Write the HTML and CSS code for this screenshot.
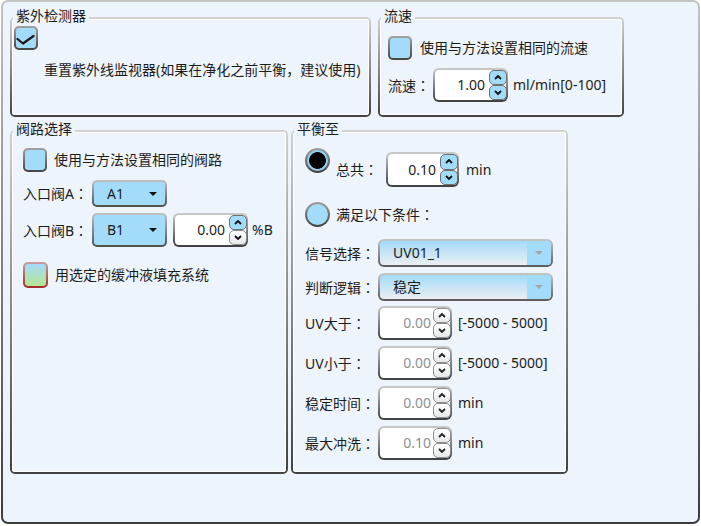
FILE: index.html
```html
<!DOCTYPE html>
<html>
<head>
<meta charset="utf-8">
<link rel="stylesheet" href="styles.css">
</head>
<body>
<div class="frame">
  <div class="row top-row">
    <div class="group g-uv">
      <span class="group-title">紫外检测器</span>
      <div class="group-body uv-body">
        <div class="check">
          <svg width="20" height="20" viewBox="0 0 20 20"><polyline points="1.5,11 7,15.5 17.5,8" fill="none" stroke="#1a1a1a" stroke-width="2.2" stroke-linejoin="round" stroke-linecap="round"/></svg>
        </div>
        <div class="uv-text">重置紫外线监视器(如果在净化之前平衡，建议使用)</div>
      </div>
    </div>
    <div class="group g-flow">
      <span class="group-title">流速</span>
      <div class="group-body flow-body">
        <div class="line">
          <div class="check"></div>
          <span class="cap">使用与方法设置相同的流速</span>
        </div>
        <div class="line flow-row">
          <span class="lbl w45">流速<span class="colon">：</span></span>
          <div class="spin w75">
            <span class="spin-val">1.00</span>
            <div class="spin-btns">
              <span class="sb"><svg width="8" height="5" viewBox="0 0 8 5"><polyline points="1,4 4,1 7,4" fill="none" stroke="#111" stroke-width="1.8"/></svg></span>
              <span class="sb"><svg width="8" height="5" viewBox="0 0 8 5"><polyline points="1,1 4,4 7,1" fill="none" stroke="#111" stroke-width="1.8"/></svg></span>
            </div>
          </div>
          <span class="unit">ml/min[0-100]</span>
        </div>
      </div>
    </div>
  </div>

  <div class="row bottom-row">
    <div class="group g-valve">
      <span class="group-title">阀路选择</span>
      <div class="group-body valve-body">
        <div class="line">
          <div class="check"></div>
          <span class="cap c7">使用与方法设置相同的阀路</span>
        </div>
        <div class="line valve-a">
          <span class="lbl w69">入口阀A<span class="colon">：</span></span>
          <div class="combo"><span>A1</span><span class="tri"></span></div>
        </div>
        <div class="line valve-b">
          <span class="lbl w69">入口阀B<span class="colon">：</span></span>
          <div class="combo h34"><span>B1</span><span class="tri"></span></div>
          <div class="spin w75 ml6">
            <span class="spin-val">0.00</span>
            <div class="spin-btns">
              <span class="sb"><svg width="8" height="5" viewBox="0 0 8 5"><polyline points="1,4 4,1 7,4" fill="none" stroke="#111" stroke-width="1.8"/></svg></span>
              <span class="sb dis"><svg width="8" height="5" viewBox="0 0 8 5"><polyline points="1,1 4,4 7,1" fill="none" stroke="#111" stroke-width="1.8"/></svg></span>
            </div>
          </div>
          <span class="unit u4">%B</span>
        </div>
        <div class="line fill-row">
          <div class="check fill"></div>
          <span class="cap c7">用选定的缓冲液填充系统</span>
        </div>
      </div>
    </div>

    <div class="group g-eq">
      <span class="group-title">平衡至</span>
      <div class="group-body eq-body">
        <div class="eq-first">
          <div class="radio on"></div>
          <div class="line total">
            <span class="lbl w50">总共<span class="colon">：</span></span>
            <div class="spin w73 h35">
              <span class="spin-val">0.10</span>
              <div class="spin-btns">
                <span class="sb"><svg width="8" height="5" viewBox="0 0 8 5"><polyline points="1,4 4,1 7,4" fill="none" stroke="#111" stroke-width="1.8"/></svg></span>
                <span class="sb"><svg width="8" height="5" viewBox="0 0 8 5"><polyline points="1,1 4,4 7,1" fill="none" stroke="#111" stroke-width="1.8"/></svg></span>
              </div>
            </div>
            <span class="unit u7">min</span>
          </div>
        </div>
        <div class="line cond">
          <div class="radio"></div>
          <span class="cap c6">满足以下条件<span class="colon">：</span></span>
        </div>
        <div class="line sig">
          <span class="lbl w73">信号选择<span class="colon">：</span></span>
          <div class="dd"><span class="dd-text">UV01_1</span><span class="dd-btn"><span class="tri gray"></span></span></div>
        </div>
        <div class="line logic">
          <span class="lbl w73">判断逻辑<span class="colon">：</span></span>
          <div class="dd"><span class="dd-text">稳定</span><span class="dd-btn"><span class="tri gray"></span></span></div>
        </div>
        <div class="line crow first">
          <span class="lbl w73">UV大于<span class="colon">：</span></span>
          <div class="spin w74 dis">
            <span class="spin-val">0.00</span>
            <div class="spin-btns">
              <span class="sb"><svg width="8" height="5" viewBox="0 0 8 5"><polyline points="1,4 4,1 7,4" fill="none" stroke="#222" stroke-width="1.8"/></svg></span>
              <span class="sb"><svg width="8" height="5" viewBox="0 0 8 5"><polyline points="1,1 4,4 7,1" fill="none" stroke="#222" stroke-width="1.8"/></svg></span>
            </div>
          </div>
          <span class="unit u6">[-5000 - 5000]</span>
        </div>
        <div class="line crow">
          <span class="lbl w73">UV小于<span class="colon">：</span></span>
          <div class="spin w74 dis">
            <span class="spin-val">0.00</span>
            <div class="spin-btns">
              <span class="sb"><svg width="8" height="5" viewBox="0 0 8 5"><polyline points="1,4 4,1 7,4" fill="none" stroke="#222" stroke-width="1.8"/></svg></span>
              <span class="sb"><svg width="8" height="5" viewBox="0 0 8 5"><polyline points="1,1 4,4 7,1" fill="none" stroke="#222" stroke-width="1.8"/></svg></span>
            </div>
          </div>
          <span class="unit u6">[-5000 - 5000]</span>
        </div>
        <div class="line crow">
          <span class="lbl w73">稳定时间<span class="colon">：</span></span>
          <div class="spin w74 dis">
            <span class="spin-val">0.00</span>
            <div class="spin-btns">
              <span class="sb"><svg width="8" height="5" viewBox="0 0 8 5"><polyline points="1,4 4,1 7,4" fill="none" stroke="#222" stroke-width="1.8"/></svg></span>
              <span class="sb"><svg width="8" height="5" viewBox="0 0 8 5"><polyline points="1,1 4,4 7,1" fill="none" stroke="#222" stroke-width="1.8"/></svg></span>
            </div>
          </div>
          <span class="unit u6">min</span>
        </div>
        <div class="line crow">
          <span class="lbl w73">最大冲洗<span class="colon">：</span></span>
          <div class="spin w74 dis">
            <span class="spin-val">0.10</span>
            <div class="spin-btns">
              <span class="sb"><svg width="8" height="5" viewBox="0 0 8 5"><polyline points="1,4 4,1 7,4" fill="none" stroke="#222" stroke-width="1.8"/></svg></span>
              <span class="sb"><svg width="8" height="5" viewBox="0 0 8 5"><polyline points="1,1 4,4 7,1" fill="none" stroke="#222" stroke-width="1.8"/></svg></span>
            </div>
          </div>
          <span class="unit u6">min</span>
        </div>
      </div>
    </div>
  </div>
</div>
</body>
</html>
```
FILE: styles.css
```css
* { box-sizing: border-box; }
html, body { margin: 0; padding: 0; background: #ffffff; }
body {
  width: 701px;
  height: 526px;
  overflow: hidden;
  font-family: "Noto Sans", "Noto Sans CJK SC", sans-serif;
  font-size: 14px;
  color: #1c1c1c;
}
.colon { font-family: "Noto Sans CJK TC", sans-serif; }
.frame {
  margin: 0 1px 0 1px;
  width: 699px;
  height: 524px;
  border: 2px solid transparent;
  border-radius: 7px;
  background: linear-gradient(#eef4fc, #eef4fc) padding-box, linear-gradient(#c4c4c4, #3c3c3c) border-box;
  padding: 15px 0 0 7px;
}
.row { display: flex; align-items: flex-start; }
.top-row { gap: 7px; }
.bottom-row { gap: 3px; margin-top: 13px; }

.group {
  position: relative;
  padding: 2px;
  border-radius: 5px;
  background: linear-gradient(#d2d2d2, #424242);
}
.group-body {
  height: 100%;
  border-radius: 3px;
  background: #eef4fc;
  box-shadow: inset 0 0 0 1px #ffffff;
}
.group-title {
  position: absolute;
  top: -10px;
  left: 3px;
  padding: 0 3px;
  line-height: 18px;
  background: #eef4fc;
  color: #1c1c1c;
  z-index: 1;
}
.g-uv { width: 361px; height: 100px; }
.g-flow { width: 246px; height: 100px; }
.g-valve { width: 278px; height: 344px; }
.g-eq { width: 277px; height: 344px; }

.line { display: flex; align-items: center; }
.lbl { flex: none; white-space: nowrap; line-height: 20px; }
.cap { margin-left: 8px; line-height: 20px; white-space: nowrap; }
.c7 { margin-left: 7px; }
.c6 { margin-left: 6px; }
.unit { margin-left: 5px; white-space: nowrap; line-height: 20px; }
.u4 { margin-left: 4px; }
.u6 { margin-left: 6px; }
.u7 { margin-left: 7px; }
.w45 { width: 45px; }
.w50 { width: 50px; }
.w69 { width: 69px; }
.w73 { width: 73px; }
.ml6 { margin-left: 6px; }

/* checkbox */
.check {
  flex: none;
  width: 24px;
  height: 24px;
  border: 2px solid transparent;
  border-radius: 5px;
  background: linear-gradient(#a3dbfa, #a3dbfa) padding-box, linear-gradient(#a2a2a2, #434343) border-box;
}
.check svg { display: block; }
.check.fill {
  height: 26px;
  width: 25px;
  background: linear-gradient(#a3dbfa, #b4e78e) padding-box, linear-gradient(#c9a0a0, #a52a2a) border-box;
}

/* radio */
.radio {
  flex: none;
  width: 25px;
  height: 25px;
  border-radius: 50%;
  border: 2px solid transparent;
  background: linear-gradient(#a3dbfa, #a3dbfa) padding-box, linear-gradient(#a0a0a0, #404040) border-box;
}
.radio.on {
  background: radial-gradient(circle, #000 0 8px, #8fd0f2 8.7px) padding-box, linear-gradient(#a0a0a0, #404040) border-box;
}

/* spin box */
.spin {
  flex: none;
  display: flex;
  width: 75px;
  height: 34px;
  border: 2px solid transparent;
  border-radius: 6px;
  background: linear-gradient(#ffffff, #ffffff) padding-box, linear-gradient(#cacaca, #3e3e3e) border-box;
}
.spin.w73 { width: 73px; }
.spin.w74 { width: 74px; }
.spin.h35 { height: 35px; }
.spin-val {
  flex: 1;
  text-align: right;
  padding-right: 4px;
  align-self: center;
  line-height: 20px;
}
.spin.dis .spin-val { color: #8e8e8e; padding-right: 2px; }
.spin-btns {
  flex: none;
  width: 18px;
  margin: 0 -1px 0 0;
  display: flex;
  flex-direction: column;
}
.sb {
  flex: 1;
  display: flex;
  align-items: center;
  justify-content: center;
  border: 1px solid #6e6e6e;
  border-radius: 5px;
  background: #a3dbfa;
}
.sb svg { display: block; }
.sb.dis, .spin.dis .sb {
  background: linear-gradient(#ffffff, #e6e8ea);
  border-color: #8c8c8c;
}

/* combo */
.combo {
  flex: none;
  display: flex;
  align-items: center;
  width: 75px;
  height: 27px;
  padding-left: 13px;
  border: 2px solid transparent;
  border-radius: 5px;
  background: linear-gradient(#a3dbfa, #a3dbfa) padding-box, linear-gradient(#c2c2c2, #4e4e4e) border-box;
  line-height: 20px;
}
.combo.h34 { height: 34px; }
.tri {
  width: 0;
  height: 0;
  margin-left: auto;
  margin-right: 8px;
  border-left: 4px solid transparent;
  border-right: 4px solid transparent;
  border-top: 4px solid #111;
}
.tri.gray { margin: 0; border-top-color: #a4a4a4; }

.dd {
  flex: none;
  display: flex;
  width: 175px;
  height: 28px;
  border: 2px solid transparent;
  border-radius: 6px;
  background: linear-gradient(#a3dbfa, #eceef1) padding-box, linear-gradient(#c6c6c6, #5a5a5a) border-box;
}
.dd-text { flex: 1; padding-left: 13px; align-self: center; line-height: 20px; }
.dd-btn {
  flex: none;
  width: 24px;
  display: flex;
  align-items: center;
  justify-content: center;
  background: #a3dbfa;
  border-radius: 0 4px 4px 0;
}

/* box-specific spacing */
.uv-body { padding: 7px 0 0 2px; }
.uv-text { margin: 10px 0 0 30px; line-height: 20px; white-space: nowrap; }

.flow-body { padding: 17px 0 0 8px; }
.flow-row { margin-top: 8px; }

.valve-body { padding: 16px 0 0 11px; }
.valve-a { margin-top: 8px; }
.valve-b { margin-top: 6px; }
.fill-row { margin-top: 15px; }

.eq-body { padding: 16px 0 0 12px; }
.eq-first { display: flex; align-items: flex-start; }
.total { margin-top: 4px; margin-left: 6px; }
.cond { margin-top: 15px; }
.sig { margin-top: 12px; }
.logic { margin-top: 6px; }
.crow { margin-top: 6px; }
.crow.first { margin-top: 5px; }
```
